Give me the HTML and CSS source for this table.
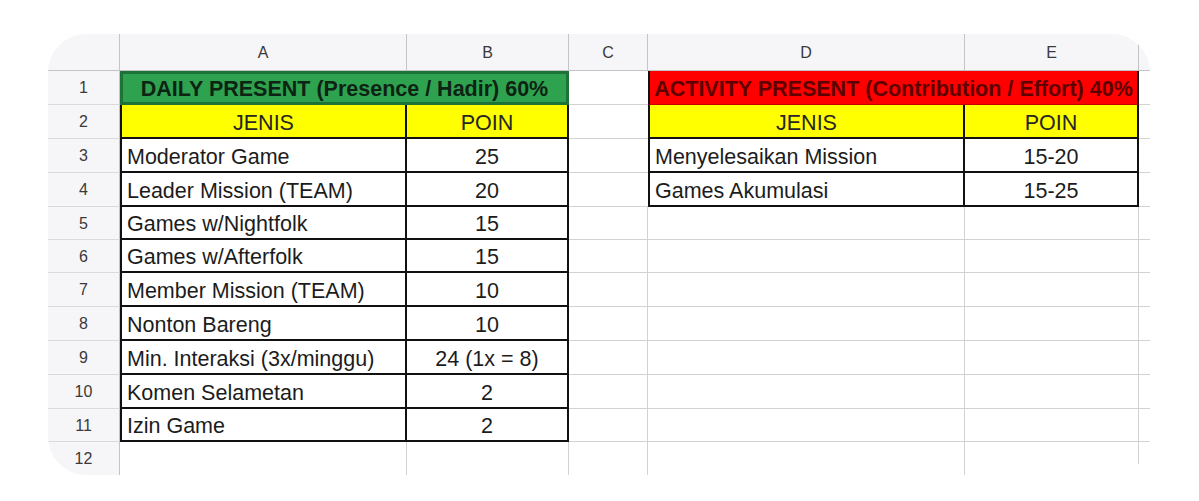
FILE: index.html
```html
<!DOCTYPE html>
<html lang="id">
<head>
<meta charset="utf-8">
<title>Sheet</title>
<link rel="stylesheet" href="styles.css">
</head>
<body>
<div class="sheet">
  <!-- header row -->
  <div class="corner"></div>
  <div class="ch">A</div>
  <div class="ch">B</div>
  <div class="ch">C</div>
  <div class="ch">D</div>
  <div class="ch">E</div>
  <div class="ch stub"></div>

  <!-- row 1 -->
  <div class="rh">1</div>
  <div class="c title green span2">DAILY PRESENT (Presence / Hadir) 60%</div>
  <div class="c noright"></div>
  <div class="c title red span2">ACTIVITY PRESENT (Contribution / Effort) 40%</div>
  <div class="c stub"></div>

  <!-- row 2 -->
  <div class="rh">2</div>
  <div class="c yellow ctr bl bk">JENIS</div>
  <div class="c yellow ctr bk">POIN</div>
  <div class="c noright"></div>
  <div class="c yellow ctr bl bk">JENIS</div>
  <div class="c yellow ctr bk">POIN</div>
  <div class="c stub"></div>

  <!-- row 3 -->
  <div class="rh">3</div>
  <div class="c bl bk">Moderator Game</div>
  <div class="c ctr bk">25</div>
  <div class="c noright"></div>
  <div class="c bl bk">Menyelesaikan Mission</div>
  <div class="c ctr bk">15-20</div>
  <div class="c stub"></div>

  <!-- row 4 -->
  <div class="rh">4</div>
  <div class="c bl bk">Leader Mission (TEAM)</div>
  <div class="c ctr bk">20</div>
  <div class="c noright"></div>
  <div class="c bl bk">Games Akumulasi</div>
  <div class="c ctr bk">15-25</div>
  <div class="c stub"></div>

  <!-- row 5 -->
  <div class="rh">5</div>
  <div class="c bl bk">Games w/Nightfolk</div>
  <div class="c ctr bk">15</div>
  <div class="c"></div>
  <div class="c"></div>
  <div class="c"></div>
  <div class="c stub"></div>

  <!-- row 6 -->
  <div class="rh">6</div>
  <div class="c bl bk">Games w/Afterfolk</div>
  <div class="c ctr bk">15</div>
  <div class="c"></div>
  <div class="c"></div>
  <div class="c"></div>
  <div class="c stub"></div>

  <!-- row 7 -->
  <div class="rh">7</div>
  <div class="c bl bk">Member Mission (TEAM)</div>
  <div class="c ctr bk">10</div>
  <div class="c"></div>
  <div class="c"></div>
  <div class="c"></div>
  <div class="c stub"></div>

  <!-- row 8 -->
  <div class="rh">8</div>
  <div class="c bl bk">Nonton Bareng</div>
  <div class="c ctr bk">10</div>
  <div class="c"></div>
  <div class="c"></div>
  <div class="c"></div>
  <div class="c stub"></div>

  <!-- row 9 -->
  <div class="rh">9</div>
  <div class="c bl bk">Min. Interaksi (3x/minggu)</div>
  <div class="c ctr bk">24 (1x = 8)</div>
  <div class="c"></div>
  <div class="c"></div>
  <div class="c"></div>
  <div class="c stub"></div>

  <!-- row 10 -->
  <div class="rh">10</div>
  <div class="c bl bk">Komen Selametan</div>
  <div class="c ctr bk">2</div>
  <div class="c"></div>
  <div class="c"></div>
  <div class="c"></div>
  <div class="c stub"></div>

  <!-- row 11 -->
  <div class="rh">11</div>
  <div class="c bl bk">Izin Game</div>
  <div class="c ctr bk">2</div>
  <div class="c"></div>
  <div class="c"></div>
  <div class="c"></div>
  <div class="c stub"></div>

  <!-- row 12 -->
  <div class="rh last">12</div>
  <div class="c last"></div>
  <div class="c last"></div>
  <div class="c last"></div>
  <div class="c last"></div>
  <div class="c last"></div>
  <div class="c stub last"></div>
</div>
</body>
</html>
```

FILE: styles.css
```css
* { box-sizing: border-box; }

html, body {
  margin: 0;
  padding: 0;
  background: #ffffff;
}

body {
  padding: 34px 0 0 48px;
  font-family: "Liberation Sans", Arial, sans-serif;
}

.sheet {
  width: 1102px;
  height: 441px;
  display: grid;
  grid-template-columns: 72px 287px 162px 79px 317px 174px 11px;
  grid-template-rows: 37px 34px 34px 34px 34px 33px 33px 34px 34px 34px 34px 33px 33px;
  border-radius: 38px;
  overflow: hidden;
  background: #ffffff;
}

.corner {
  background: #f6f6f9;
  border-right: 1px solid #c4c4c6;
  border-bottom: 1px solid #c4c4c6;
}

.ch {
  background: #f6f6f9;
  border-right: 1px solid #c4c4c6;
  border-bottom: 1px solid #c4c4c6;
  display: flex;
  align-items: center;
  justify-content: center;
  padding-top: 2px;
  font-size: 16px;
  color: #3a3a3a;
}

.ch.stub { border-right: none; }

.rh {
  background: #f6f6f9;
  border-right: 1px solid #c4c4c6;
  border-bottom: 1px solid #dadadc;
  display: flex;
  align-items: center;
  justify-content: center;
  padding-top: 1px;
  font-size: 16px;
  color: #3a3a3a;
}

.rh.last { border-bottom: none; }

.c {
  border-right: 1px solid #d2d2d2;
  border-bottom: 1px solid #d2d2d2;
  display: flex;
  align-items: center;
  padding: 4px 5px 0 5px;
  font-size: 21.5px;
  color: #1c1c1c;
  white-space: nowrap;
}

.c.last { border-bottom: none; }
.c.stub { border-right: none; }
.c.noright { border-right: none; }

.ctr { justify-content: center; }

.span2 { grid-column: span 2; }

.bk {
  border-right: 2px solid #111;
  border-bottom: 2px solid #111;
}

.bl { border-left: 2px solid #111; }

.yellow {
  background: #ffff00;
  color: #262626;
}

.title {
  justify-content: center;
  font-weight: bold;
  padding: 3px 0 0 0;
}

.green {
  background: #2fa24f;
  border: 3px solid #1d7237;
  color: #0d2414;
}

.red {
  background: #ff0000;
  border-left: 2px solid #111;
  border-right: 2px solid #111;
  border-bottom: 1px solid #c40000;
  color: #5e0000;
}
```
